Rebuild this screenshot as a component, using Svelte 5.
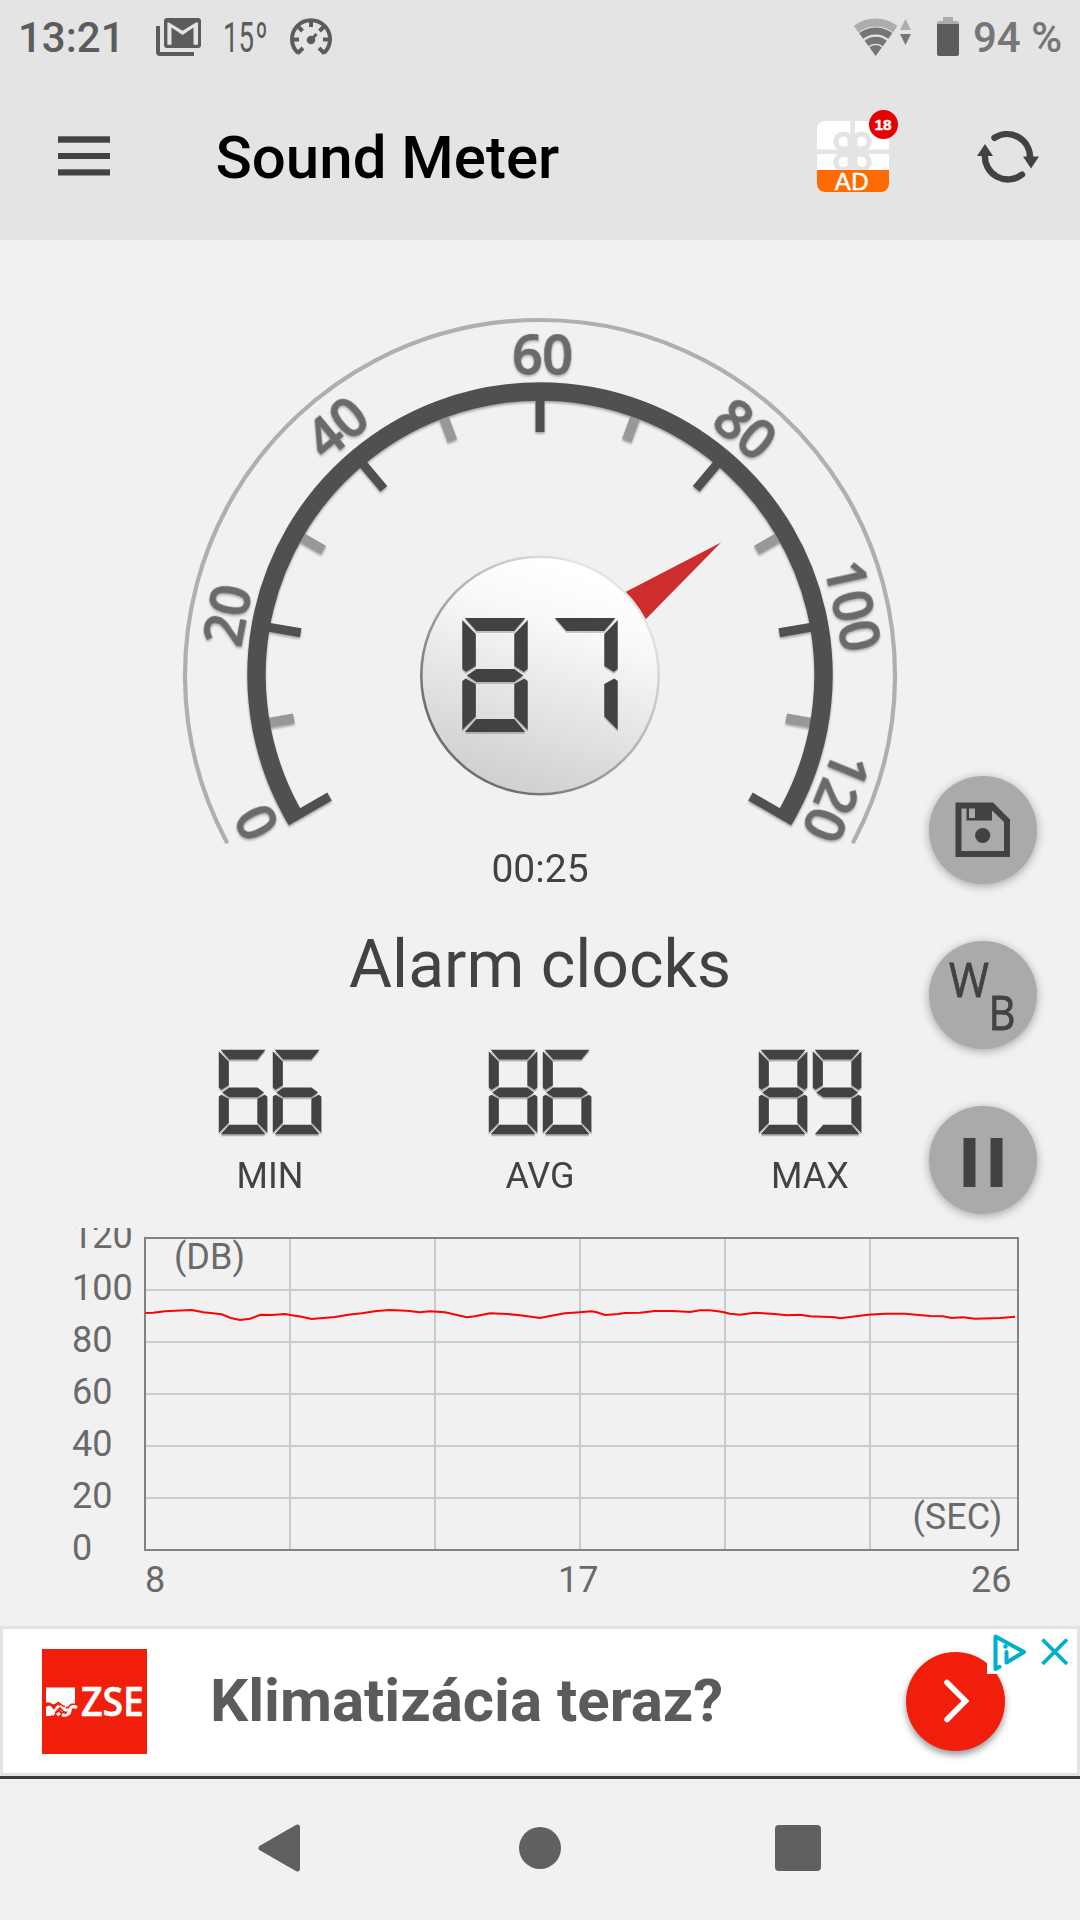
<script lang="ts">
  type Stat = { label: string; value: number };

  const level = 87;
  const elapsed = '00:25';
  const stats: Stat[] = [
    { label: 'MIN', value: 66 },
    { label: 'AVG', value: 86 },
    { label: 'MAX', value: 89 },
  ];

  // seven segment digits, drawn in a 65.4 x 114 box
  const segments: Record<string, string> = {
    a: '2.5,0 63,0 52,13 14,13',
    b: '65.4,2 52,16 52,48 61.5,54 65.4,51',
    c: '65.4,63 61.9,60.5 52,66 52,98.5 65.4,112',
    d: '2.5,114 14,101 52,101 63,114',
    e: '0,63 3.5,60.5 13.5,66 13.5,98.5 0,112',
    f: '0,2 13.5,16 13.5,48 3.8,54 0,51',
    g: '4.5,57.5 14,51 52,51 61,57.5 52,64 14,64',
  };
  const digitMap: Record<string, string> = {
    '0': 'abcdef',
    '1': 'bc',
    '2': 'abdeg',
    '3': 'abcdg',
    '4': 'bcfg',
    '5': 'acdfg',
    '6': 'acdefg',
    '7': 'abc',
    '8': 'abcdefg',
    '9': 'abcdfg',
  };

  const scale = [
    { text: '0', angle: -117.5, r: 300 },
    { text: '20', angle: -79.2, r: 299.5 },
    { text: '40', angle: -39.4, r: 301 },
    { text: '60', angle: 0.4, r: 301 },
    { text: '80', angle: 39.8, r: 301 },
    { text: '100', angle: 77.5, r: 301 },
    { text: '120', angle: 112.3, r: 301 },
  ];
  const majorTicks = [-120, -80, -40, 0, 40, 80, 120];
  const minorTicks = [-100, -60, -20.5, 20.3, 60, 100];

  function arc(r: number, deg: number) {
    const a = (deg * Math.PI) / 180;
    const x = r * Math.sin(a);
    const y = -r * Math.cos(a);
    return `M${-x} ${y}A${r} ${r} 0 1 1 ${x} ${y}`;
  }

  const yLabels = [120, 100, 80, 60, 40, 20, 0];
  const history =
    '145.3,85 153,84.7 165,83.3 175,82.7 191.7,82 203.3,84.3 221.7,86.3 230.7,90 240,92 250,90.7 260.7,86.7 271.7,87 285,86 291.7,87.3 301.7,88.7 311.7,91 335,89 348.3,86.7 361.7,85.3 376.7,83 390,82 406.7,82.7 420,84.3 430,83.3 445,84.3 466.7,89.3 475,88.3 490,85.3 506.7,86 520,87.3 540,90 550,88 565,85.3 580,84.3 591.7,83.3 596.7,84.3 605,87 618,86 625,85 640,84.7 655,83 673,83 690,84 700,82.3 710,82.3 723,84 730,85.7 740,86.7 755,84.7 775,86 786.7,87.3 800,86.7 810,88.3 835,89.3 840,90.3 868,86.7 885,85.7 905,85.7 930,88 943,88.3 951.7,90 963,89.3 975,90.7 1000,90 1015,88.7';
</script>

{#snippet digits(value: number, pitch: number)}
  {#each String(value).split('') as ch, i}
    <g transform="translate({i * pitch} 0)">
      {#each digitMap[ch].split('') as s}
        <polygon points={segments[s]} />
      {/each}
    </g>
  {/each}
{/snippet}

<div class="screen">
  <header class="header">
    <div class="status">
      <span class="clock">13:21</span>
      <svg width="45" height="38" viewBox="0 0 45 38">
        <path d="M2 8v26a2 2 0 0 0 2 2h34" fill="none" stroke="#5c5c5c" stroke-width="4" />
        <path d="M11 0h31a3 3 0 0 1 3 3v24a3 3 0 0 1-3 3H11a3 3 0 0 1-3-3V3a3 3 0 0 1 3-3z" fill="#5c5c5c" />
        <path d="M11.4 4.5H13L26.500 12.800 40 4.500H42V26.700H37.500V9.500L26.500 17 15.500 9.500V26.700H11.400z" fill="#e4e4e4" />
      </svg>
      <svg class="temp" width="46" height="50" viewBox="0 0 46 50">
        <text x="0" y="39.5" textLength="31" lengthAdjust="spacingAndGlyphs">15</text>
        <text x="32.5" y="39.5" textLength="12" lengthAdjust="spacingAndGlyphs">º</text>
      </svg>
      <svg width="42" height="38" viewBox="0 0 42 38" fill="none" stroke="#5c5c5c">
        <path d="M8 35A19 19 0 1 1 34 35" stroke-width="4" />
        <path d="M7.5 35.5l5.5-5.5M34.5 35.5L29 30M21 2v7M3 21.5h6M39 21.5h-6M8.500 9l4 4M33.500 9l-4 4" stroke-width="4" />
        <path d="M21 22l5.5-6" stroke-width="3" />
        <circle cx="21" cy="22" r="4.3" fill="#5c5c5c" stroke="none" />
      </svg>
      <span class="spacer"></span>
      <svg class="wifi" width="60" height="38" viewBox="0 0 60 38">
        <clipPath id="fan"><path d="M22.7 38L-6-1.5H51.5z" /></clipPath>
        <g clip-path="url(#fan)" fill="none" stroke="#767676">
          <circle cx="22.7" cy="36.5" r="32" stroke="#adadad" stroke-width="8" />
          <circle cx="22.7" cy="36.5" r="23.5" stroke-width="7" />
          <circle cx="22.7" cy="36.5" r="14.3" stroke-width="7" />
          <circle cx="22.7" cy="36.5" r="4.7" stroke-width="9.4" />
        </g>
        <path d="M47 12L52.5 1 58 12z" fill="#adadad" />
        <path d="M47 16L52.5 27 58 16z" fill="#767676" />
      </svg>
      <svg class="battery" width="22" height="39" viewBox="0 0 22 39">
        <path d="M0 8V6a2 2 0 0 1 2-2h4V0h10v4h4a2 2 0 0 1 2 2v2z" fill="#adadad" />
        <path d="M0 7h22v30a2 2 0 0 1-2 2H2a2 2 0 0 1-2-2z" fill="#5c5c5c" />
      </svg>
      <span class="percent">94 %</span>
    </div>

    <div class="toolbar">
      <svg width="52" height="44" viewBox="0 0 52 44" fill="#424242">
        <rect y="1.3" width="52" height="6.4" />
        <rect y="18" width="52" height="6" />
        <rect y="34.3" width="52" height="6.2" />
      </svg>
      <h1>Sound Meter</h1>
      <svg width="82" height="94" viewBox="0 0 82 94">
        <clipPath id="tile"><rect y="11" width="72" height="71" rx="8" /></clipPath>
        <g clip-path="url(#tile)">
          <rect y="11" width="72" height="71" fill="#fff" />
          <path d="M35.6 10v60M0 41.7h72" stroke="#e4e4e4" stroke-width="4.6" />
          <path
            d="M33 39H26a7.5 7.5 0 1 1 7-11zM38 39h7a7.5 7.5 0 1 0-7-11zM33 44.5H26a7.5 7.5 0 1 0 7 11zM38 44.5h7a7.5 7.5 0 1 1-7 11z"
            fill="#fff"
            stroke="#e4e4e4"
            stroke-width="5"
          />
          <rect y="60" width="72" height="22" fill="#ff6b03" />
        </g>
        <text class="ad-label" x="35" y="79.6">AD</text>
        <circle cx="66.5" cy="14.5" r="14.5" fill="#e60000" />
        <text class="ad-count" x="66" y="19.8">18</text>
      </svg>
      <svg class="refresh" width="64" height="58" viewBox="0 0 64 58">
        <g fill="none" stroke="#424242" stroke-width="6.4" stroke-linecap="round">
          <path d="M18.5 9.800A23 23 0 0 1 54 29" />
          <path d="M46 46.600A23 23 0 0 1 9 26" />
        </g>
        <path d="M47 28.5h16L55 40.5zM1 28L9 16l8 12z" fill="#424242" />
      </svg>
    </div>
  </header>

  <main class="meter">
    <svg class="gauge" width="720" height="531" viewBox="-360 -360 720 531">
      <defs>
        <linearGradient id="knob" x1="0.65" y1="0.06" x2="0.35" y2="0.98">
          <stop offset="0" stop-color="#fff" />
          <stop offset="0.25" stop-color="#f8f8f8" />
          <stop offset="1" stop-color="#cfcfcf" />
        </linearGradient>
        <linearGradient id="rim" x1="0.85" y1="0.2" x2="0.25" y2="0.85">
          <stop offset="0" stop-color="#e4e4e4" />
          <stop offset="0.5" stop-color="#b0b0b0" />
          <stop offset="1" stop-color="#6f6f6f" />
        </linearGradient>
      </defs>
      <path d={arc(355, 118)} fill="none" stroke="#afafaf" stroke-width="4.2" stroke-linecap="round" />
      <g class="shadow">
        {#each minorTicks as a}
          <path d="M0-276V-250" stroke="#989898" stroke-width="10" transform="rotate({a})" />
        {/each}
        <path d={arc(283.5, 120.7)} fill="none" stroke="#505050" stroke-width="18.4" />
        {#each majorTicks as a}
          <path d="M0-{Math.abs(a) === 120 ? 292.5 : 276}V-243" stroke="#505050" stroke-width="9" transform="rotate({a})" />
        {/each}
      </g>
      <g class="scale">
        {#each scale as s}
          <text y={-s.r} transform="rotate({s.angle})">{s.text}</text>
        {/each}
      </g>
      <path d="M181-132.5L85-82.7 105-55z" fill="#ce2d2e" />
      <circle cy="0.5" r="118.7" fill="url(#knob)" stroke="url(#rim)" stroke-width="2.6" />
      <g class="level" transform="translate(-77.7 -57)">{@render digits(level, 90)}</g>
    </svg>

    <div class="elapsed">{elapsed}</div>
    <div class="reference">Alarm clocks</div>

    <div class="stats">
      {#each stats as s}
        <div class="stat">
          <svg width="104" height="88" viewBox="-1 -1 140 118.6">
            {@render digits(s.value, 72.8)}
          </svg>
          <span>{s.label}</span>
        </div>
      {/each}
    </div>

    <svg class="chart" width="1080" height="398" viewBox="0 0 1080 398">
      {#each yLabels as v, i}
        <text x="72" y={20 + i * 52}>{v}</text>
      {/each}
      {#each [1, 2, 3, 4, 5] as i}
        <path class="grid" d="M{145 + i * 145} 10V322M145 {10 + i * 52}H1018" />
      {/each}
      <rect x="145" y="10" width="873" height="312" fill="none" stroke="#828282" stroke-width="2" />
      <polyline points={history} fill="none" stroke="#f00" stroke-width="2" />
      <text x="174" y="41">(DB)</text>
      <text x="912.5" y="301">(SEC)</text>
      <text x="145" y="364">8</text>
      <text x="558" y="364">17</text>
      <text x="971" y="364">26</text>
    </svg>

    <div class="actions">
      <button type="button" aria-label="Save">
        <svg width="56" height="56" viewBox="0 0 56 56" fill="#424242">
          <path fill-rule="evenodd" d="M.5 .5H38L55 17.5V55H.5zM6.5 6.5V49H49V20L37 8.5V18.5H11.5V6.5zM14 6.5v9.5h6V6.5z" />
          <circle cx="27.7" cy="33.5" r="7.6" />
        </svg>
      </button>
      <button type="button">
        <svg class="wb" width="108" height="108" viewBox="0 0 108 108">
          <text x="20" y="55.5" textLength="40" lengthAdjust="spacingAndGlyphs">W</text>
          <text x="59.5" y="88.5" textLength="27" lengthAdjust="spacingAndGlyphs">B</text>
        </svg>
      </button>
      <button type="button" aria-label="Pause">
        <svg width="40" height="54" viewBox="0 0 40 54" fill="#424242">
          <rect x="0.5" y="5" width="12" height="49" />
          <rect x="27.5" y="5" width="12" height="49" />
        </svg>
      </button>
    </div>
  </main>

  <aside class="banner">
    <svg class="logo" width="105" height="105" viewBox="0 0 105 105">
      <rect width="105" height="105" fill="#f21e0c" />
      <path d="M4 38.5h29v16h-4l-3 3-5 1-5-5-5 2-3-2H4z" fill="#fff" />
      <path d="M4 58l4-2 4 5-3 6H4z" fill="#fff" />
      <path d="M10 66l6-8 6 4M19 55l4 6h4M15 66l3-2M35 58.5c-5-2-7 0-7 3s-4 6-8 4" fill="none" stroke="#fff" stroke-width="3.2" />
      <path d="M4 54.5c4 0 4 3 8 2M13 64l5-5 6 6M15 53.5c4 0 4 4 8 4" fill="none" stroke="#f21e0c" stroke-width="1.6" />
      <text x="39" y="67.3" textLength="63" lengthAdjust="spacingAndGlyphs">ZSE</text>
    </svg>
    <span class="headline">Klimatizácia teraz?</span>
    <div class="go">
      <svg width="34" height="50" viewBox="0 0 34 50">
        <path d="M8 6.5L26.5 25 8 43.5" fill="none" stroke="#fff" stroke-width="5.6" stroke-linecap="round" />
      </svg>
    </div>
    <div class="adchoices">
      <svg width="90" height="45" viewBox="0 0 90 45" fill="none" stroke="#00aecd">
        <path d="M12.5 37.8L8.5 40V7.5L37 23 19.5 33.5V23" stroke-width="4" stroke-linejoin="round" stroke-linecap="round" />
        <circle cx="18.5" cy="17.5" r="2.2" fill="#00aecd" stroke="none" />
        <path d="M55.5 10.5L80 35M80 10.5L55.5 35" stroke-width="3.8" />
      </svg>
    </div>
  </aside>

  <nav class="nav">
    <svg width="44" height="50" viewBox="0 0 44 50">
      <path d="M4 25L40.5 4v42z" fill="#606060" stroke="#606060" stroke-width="5" stroke-linejoin="round" />
    </svg>
    <span class="home"></span>
    <span class="recent"></span>
  </nav>
</div>

<style>
  :global(body) {
    margin: 0;
    background: #f1f1f1;
  }
  .screen {
    width: 1080px;
    height: 1920px;
    display: flex;
    flex-direction: column;
    overflow: hidden;
    background: #f1f1f1;
    font-family: Roboto, sans-serif;
    color: #424242;
  }
  svg {
    display: block;
    flex: none;
  }
  .header {
    height: 240px;
    background: #e4e4e4;
  }
  .status {
    height: 75px;
    box-sizing: border-box;
    padding: 0 18px 2px 18px;
    display: flex;
    align-items: center;
    font-size: 42px;
    font-weight: 500;
    color: #5c5c5c;
  }
  .clock {
    width: 138px;
    padding-top: 2px;
  }
  .temp {
    margin: 0 21px 0 22px;
    fill: #5c5c5c;
    font-weight: 400;
    overflow: visible;
  }
  .spacer {
    flex: 1;
  }
  .wifi {
    margin-right: 24px;
  }
  .battery {
    margin-right: 14px;
  }
  .percent {
    width: 89px;
    padding-top: 2px;
    color: #767676;
    white-space: nowrap;
  }
  .toolbar {
    height: 165px;
    box-sizing: border-box;
    padding: 0 40px 2px 58px;
    display: flex;
    align-items: center;
  }
  .toolbar h1 {
    flex: 1;
    margin: 0;
    padding: 2px 0 0 105.5px;
    font-size: 60px;
    font-weight: 500;
    color: #000;
  }
  .refresh {
    margin-left: 77px;
  }
  .ad-label {
    font: 24px 'Liberation Sans', sans-serif;
    letter-spacing: 0.6px;
    fill: #fff;
    stroke: #fff;
    stroke-width: 0.5px;
    text-anchor: middle;
  }
  .ad-count {
    font: bold 15.5px 'Liberation Sans', sans-serif;
    fill: #fff;
    stroke: #fff;
    stroke-width: 0.4px;
    text-anchor: middle;
  }
  .meter {
    position: relative;
    height: 1386px;
    display: flex;
    flex-direction: column;
    align-items: center;
  }
  .gauge {
    margin-top: 75px;
    overflow: visible;
  }
  .shadow {
    filter: drop-shadow(0 2.5px 1px rgba(0, 0, 0, 0.3));
  }
  .scale {
    font-family: 'Open Sans', sans-serif;
    font-size: 54px;
    font-weight: 600;
    letter-spacing: -0.5px;
    text-anchor: middle;
    fill: #6a6a6a;
    stroke: #6a6a6a;
    stroke-width: 0.9px;
    filter: drop-shadow(0 2px 1px rgba(0, 0, 0, 0.25));
  }
  .level {
    fill: #424242;
    filter: drop-shadow(0 2px 0.5px rgba(0, 0, 0, 0.2));
  }
  .elapsed {
    font-size: 39px;
    line-height: 46px;
  }
  .reference {
    margin-top: 34px;
    font-size: 66px;
    line-height: 78px;
  }
  .stats {
    width: 810px;
    margin-top: 45px;
    display: grid;
    grid-template-columns: repeat(3, 1fr);
  }
  .stat {
    display: flex;
    flex-direction: column;
    align-items: center;
    font-size: 36px;
    line-height: 42px;
  }
  .stat svg {
    margin-bottom: 18px;
    fill: #424242;
    filter: drop-shadow(0 2px 0 rgba(0, 0, 0, 0.25));
  }
  .chart {
    margin-top: 31px;
    font-size: 36px;
    fill: #6a6a6a;
  }
  .grid {
    stroke: #cacaca;
    stroke-width: 2;
  }
  /* floating buttons sit over the gauge and the stats */
  .actions {
    position: absolute;
    top: 536px;
    right: 43.5px;
    display: flex;
    flex-direction: column;
    gap: 57px;
  }
  .actions button {
    width: 108px;
    height: 108px;
    padding: 0;
    border: none;
    border-radius: 50%;
    background: #aaa;
    display: flex;
    align-items: center;
    justify-content: center;
    box-shadow: 0 2px 10px rgba(0, 0, 0, 0.32);
  }
  .wb {
    font-family: 'Open Sans', sans-serif;
    font-size: 48px;
    font-weight: 500;
    fill: #424242;
    stroke: #424242;
    stroke-width: 0.8px;
  }
  .banner {
    position: relative;
    height: 150px;
    box-sizing: border-box;
    flex: none;
    padding: 0 72px 0 39px;
    display: flex;
    align-items: center;
    border: 3px solid #e3e3e3;
    background: #fff;
  }
  .logo text {
    font-family: 'Open Sans', sans-serif;
    font-size: 40px;
    font-weight: 600;
    fill: #fff;
    stroke: #fff;
    stroke-width: 0.5px;
  }
  .headline {
    flex: 1;
    padding-left: 63px;
    font-size: 60px;
    font-weight: 700;
    line-height: 70px;
    color: #5b5b5b;
    white-space: nowrap;
  }
  .go {
    width: 99px;
    height: 99px;
    flex: none;
    border-radius: 50%;
    background: #f21e0c;
    display: flex;
    align-items: center;
    justify-content: center;
    box-shadow: 0 4px 7px rgba(0, 0, 0, 0.4);
  }
  .adchoices {
    position: absolute;
    top: 0;
    right: 0;
    background: #fff;
  }
  .nav {
    flex: 1;
    box-sizing: border-box;
    padding: 0 259px 3px 257px;
    display: flex;
    align-items: center;
    border-top: 3px solid #3c3c40;
  }
  .home {
    width: 42px;
    height: 42px;
    margin: 0 auto 0 218px;
    border-radius: 50%;
    background: #606060;
  }
  .recent {
    width: 46px;
    height: 46px;
    border-radius: 4px;
    background: #606060;
  }
</style>
